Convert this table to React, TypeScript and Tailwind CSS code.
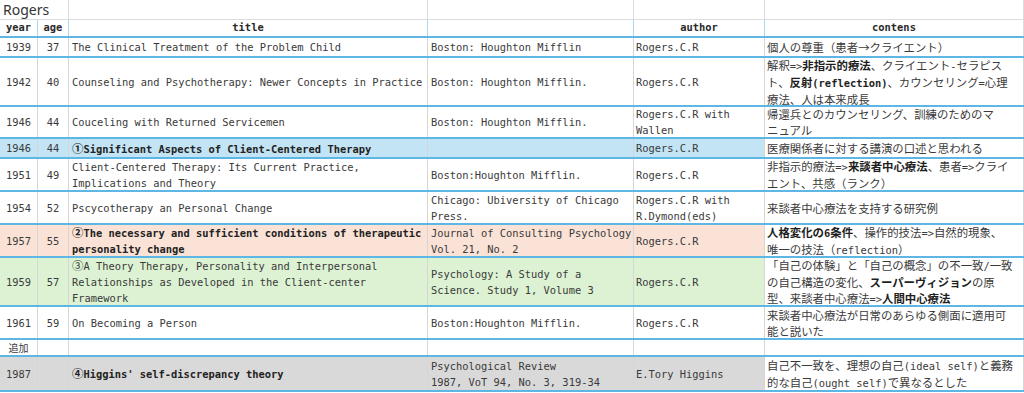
import React from 'react'

// latin runs inside Japanese text, and CJK glyphs inside latin text
const L = ({ children }: { children: React.ReactNode }) => (
  <span className="font-['DejaVu_Sans_Mono',monospace] text-[10.4px]">{children}</span>
)
const J = ({ children }: { children: React.ReactNode }) => (
  <span className="font-['Noto_Sans_CJK_JP',sans-serif] text-[11.4px]">{children}</span>
)

interface Entry {
  year: React.ReactNode
  age: string
  title: React.ReactNode
  publisher: React.ReactNode
  author: React.ReactNode
  contents: React.ReactNode
  height: string
  bg: string
  bold?: boolean
}

const entries: Entry[] = [
  {
    year: '1939',
    age: '37',
    title: 'The Clinical Treatment of the Problem Child',
    publisher: 'Boston: Houghton Mifflin',
    author: 'Rogers.C.R',
    contents: <>個人の尊重（患者→クライエント）</>,
    height: 'h-[20px]',
    bg: 'bg-white',
  },
  {
    year: '1942',
    age: '40',
    title: 'Counseling and Psychotherapy: Newer Concepts in Practice',
    publisher: 'Boston: Houghton Mifflin.',
    author: 'Rogers.C.R',
    contents: (
      <>
        解釈<L>=&gt;</L><b>非指示的療法</b>、クライエント<L>-</L>セラピス
        <br />
        ト、<b>反射<L>(reflection)</L></b>、カウンセリング<L>=</L>心理
        <br />
        療法、人は本来成長
      </>
    ),
    height: 'h-[49px]',
    bg: 'bg-white',
  },
  {
    year: '1946',
    age: '44',
    title: 'Couceling with Returned Servicemen',
    publisher: 'Boston: Houghton Mifflin.',
    author: (
      <>
        Rogers.C.R with
        <br />
        Wallen
      </>
    ),
    contents: (
      <>
        帰還兵とのカウンセリング、訓練のためのマ
        <br />
        ニュアル
      </>
    ),
    height: 'h-[32px]',
    bg: 'bg-white',
  },
  {
    year: '1946',
    age: '44',
    title: (
      <>
        <J>①</J>Significant Aspects of Client-Centered Therapy
      </>
    ),
    publisher: '',
    author: 'Rogers.C.R',
    contents: <>医療関係者に対する講演の口述と思われる</>,
    height: 'h-[20px]',
    bg: 'bg-[#c2e4f4]',
    bold: true,
  },
  {
    year: '1951',
    age: '49',
    title: (
      <>
        Client-Centered Therapy: Its Current Practice,
        <br />
        Implications and Theory
      </>
    ),
    publisher: 'Boston:Houghton Mifflin.',
    author: 'Rogers.C.R',
    contents: (
      <>
        非指示的療法<L>=&gt;</L><b>来談者中心療法</b>、患者<L>=&gt;</L>クライ
        <br />
        エント、共感（ランク）
      </>
    ),
    height: 'h-[33px]',
    bg: 'bg-white',
  },
  {
    year: '1954',
    age: '52',
    title: 'Pscycotherapy an Personal Change',
    publisher: (
      <>
        Chicago: Ubiversity of Chicago
        <br />
        Press.
      </>
    ),
    author: (
      <>
        Rogers.C.R with
        <br />
        R.Dymond(eds)
      </>
    ),
    contents: <>来談者中心療法を支持する研究例</>,
    height: 'h-[33px]',
    bg: 'bg-white',
  },
  {
    year: '1957',
    age: '55',
    title: (
      <>
        <J>②</J>The necessary and sufficient conditions of therapeutic
        <br />
        personality change
      </>
    ),
    publisher: (
      <>
        Journal of Consulting Psychology
        <br />
        Vol. 21, No. 2
      </>
    ),
    author: 'Rogers.C.R',
    contents: (
      <>
        <b>
          人格変化の<L>6</L>条件
        </b>
        、操作的技法<L>=&gt;</L>自然的現象、
        <br />
        唯一の技法（<L>reflection</L>）
      </>
    ),
    height: 'h-[33px]',
    bg: 'bg-[#fbe2d6]',
    bold: true,
  },
  {
    year: '1959',
    age: '57',
    title: (
      <>
        <J>③</J>A Theory Therapy, Personality and Interpersonal
        <br />
        Relationships as Developed in the Client-center
        <br />
        Framework
      </>
    ),
    publisher: (
      <>
        Psychology: A Study of a
        <br />
        Science. Study 1, Volume 3
      </>
    ),
    author: 'Rogers.C.R',
    contents: (
      <>
        「自己の体験」と「自己の概念」の不一致<L>/</L>一致
        <br />
        の自己構造の変化、<b>スーパーヴィジョン</b>の原
        <br />
        型、来談者中心療法<L>=&gt;</L><b>人間中心療法</b>
      </>
    ),
    height: 'h-[49px]',
    bg: 'bg-[#dcf2d3]',
  },
  {
    year: '1961',
    age: '59',
    title: 'On Becoming a Person',
    publisher: 'Boston:Houghton Mifflin.',
    author: 'Rogers.C.R',
    contents: (
      <>
        来談者中心療法が日常のあらゆる側面に適用可
        <br />
        能と説いた
      </>
    ),
    height: 'h-[33px]',
    bg: 'bg-white',
  },
  {
    year: <span className="font-['Noto_Sans_CJK_JP',sans-serif] text-[10px]">追加</span>,
    age: '',
    title: '',
    publisher: '',
    author: '',
    contents: '',
    height: 'h-[17px]',
    bg: 'bg-white',
  },
  {
    year: '1987',
    age: '',
    title: (
      <>
        <J>④</J>Higgins' self-discrepancy theory
      </>
    ),
    publisher: (
      <>
        Psychological Review
        <br />
        1987, VoT 94, No. 3, 319-34
      </>
    ),
    author: 'E.Tory Higgins',
    contents: (
      <>
        自己不一致を、理想の自己<L>(ideal self)</L>と義務
        <br />
        的な自己<L>(ought self)</L>で異なるとした
      </>
    ),
    height: 'h-[35px]',
    bg: 'bg-[#d9d9d9]',
    bold: true,
  },
]

const cols = 'grid grid-cols-[38px_31px_359px_206px_131px_259px]'
const cell = 'flex items-center border-r border-[#d6d6d6] overflow-hidden whitespace-nowrap leading-[16px]'

export default function App() {
  return (
    <div className="w-[1024px] h-[393px] bg-white overflow-hidden font-['DejaVu_Sans_Mono','Noto_Sans_CJK_JP',monospace] text-[10.4px] text-[#3a3a3a]">
      {/* sheet name row */}
      <div className="grid grid-cols-[69px_359px_206px_131px_259px] h-[20px] border-b border-[#dcdcdc]">
        <div className="flex items-center pl-[3px] border-r border-[#dcdcdc] font-['Noto_Sans',sans-serif] text-[14px] leading-[18px] text-[#333]">
          Rogers
        </div>
        <div className="border-r border-[#dcdcdc]" />
        <div className="border-r border-[#dcdcdc]" />
        <div className="border-r border-[#dcdcdc]" />
        <div className="border-r border-[#dcdcdc]" />
      </div>

      {/* header */}
      <div className={`${cols} h-[18px] border-b-2 border-b-[#5db6e4] font-bold text-[#2a2a2a]`}>
        <div className="flex items-center justify-center border-r border-[#a8d7f0]">year</div>
        <div className="flex items-center justify-center border-r border-[#a8d7f0]">age</div>
        <div className="flex items-center justify-center border-r border-[#a8d7f0]">title</div>
        <div className="border-r border-[#a8d7f0]" />
        <div className="flex items-center justify-center border-r border-[#a8d7f0]">author</div>
        <div className="flex items-center justify-center border-r border-[#dcdcdc]">contens</div>
      </div>

      {entries.map((e, i) => (
        <div key={i} className={`${cols} ${e.height} border-b-2 border-b-[#5db6e4]`}>
          <div className={`${cell} ${e.bg} justify-center`}>{e.year}</div>
          <div className={`${cell} ${e.bg} justify-center`}>{e.age}</div>
          <div className={`${cell} ${e.bg} pl-[3px] ${e.bold ? 'font-bold text-[#222]' : ''}`}>
            <div>{e.title}</div>
          </div>
          <div className={`${cell} ${e.bg} pl-[3px]`}>
            <div>{e.publisher}</div>
          </div>
          <div className={`${cell} ${e.bg} pl-[2px]`}>
            <div>{e.author}</div>
          </div>
          <div className={`${cell} bg-white pl-[2px] font-['Noto_Sans_CJK_JP',sans-serif] text-[11.4px] [&_b]:font-bold [&_b]:text-[#1e1e1e]`}>
            <div>{e.contents}</div>
          </div>
        </div>
      ))}
    </div>
  )
}
